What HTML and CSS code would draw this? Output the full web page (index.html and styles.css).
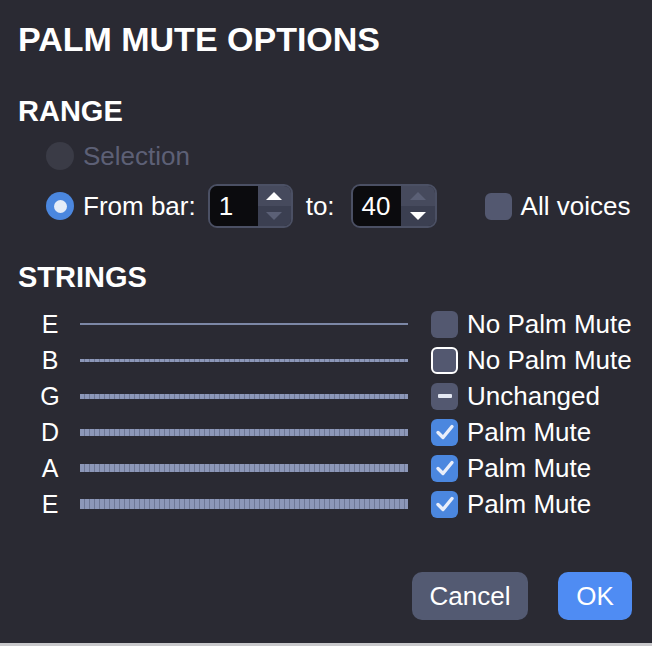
FILE: index.html
```html
<!DOCTYPE html>
<html>
<head>
<meta charset="utf-8">
<link rel="stylesheet" href="styles.css">
</head>
<body>
<div class="dialog">
  <h1 class="title">PALM MUTE OPTIONS</h1>
  <h2 class="heading range-h">RANGE</h2>
  <div class="row sel-row">
    <span class="radio disabled"></span>
    <span class="label dim">Selection</span>
  </div>
  <div class="row from-row">
    <span class="radio on"><span class="dot"></span></span>
    <span class="label">From bar:</span>
    <div class="spinner sp1">
      <div class="field">1</div>
      <div class="stepper">
        <div class="half top"><span class="tri up bright"></span></div>
        <div class="half bottom"><span class="tri down"></span></div>
      </div>
    </div>
    <span class="label to">to:</span>
    <div class="spinner sp2">
      <div class="field">40</div>
      <div class="stepper">
        <div class="half top"><span class="tri up"></span></div>
        <div class="half bottom"><span class="tri down bright"></span></div>
      </div>
    </div>
    <span class="box plain voices-box"></span>
    <span class="label">All voices</span>
  </div>
  <h2 class="heading strings-h">STRINGS</h2>
  <div class="strings">
    <div class="srow"><span class="sname">E</span><span class="wire w1"></span><span class="box plain"></span><span class="label">No Palm Mute</span></div>
    <div class="srow"><span class="sname">B</span><span class="wire w2"></span><span class="box plain focus"></span><span class="label">No Palm Mute</span></div>
    <div class="srow"><span class="sname">G</span><span class="wire w3"></span><span class="box plain"><span class="dash"></span></span><span class="label">Unchanged</span></div>
    <div class="srow"><span class="sname">D</span><span class="wire w4"></span><span class="box checked"><svg viewBox="0 0 26 26" width="26" height="26"><path d="M6 13.5 L11 18.5 L20 7.5" fill="none" stroke="#e9eefa" stroke-width="3.4" stroke-linecap="round" stroke-linejoin="round"/></svg></span><span class="label">Palm Mute</span></div>
    <div class="srow"><span class="sname">A</span><span class="wire w5"></span><span class="box checked"><svg viewBox="0 0 26 26" width="26" height="26"><path d="M6 13.5 L11 18.5 L20 7.5" fill="none" stroke="#e9eefa" stroke-width="3.4" stroke-linecap="round" stroke-linejoin="round"/></svg></span><span class="label">Palm Mute</span></div>
    <div class="srow"><span class="sname">E</span><span class="wire w6"></span><span class="box checked"><svg viewBox="0 0 26 26" width="26" height="26"><path d="M6 13.5 L11 18.5 L20 7.5" fill="none" stroke="#e9eefa" stroke-width="3.4" stroke-linecap="round" stroke-linejoin="round"/></svg></span><span class="label">Palm Mute</span></div>
  </div>
  <div class="buttons">
    <button class="btn cancel">Cancel</button>
    <button class="btn ok">OK</button>
  </div>
</div>
</body>
</html>
```

FILE: styles.css
```css
html, body {
  margin: 0;
  padding: 0;
  background: #c9c9cc;
}
body {
  width: 652px;
  height: 646px;
  overflow: hidden;
  font-family: "Liberation Sans", Arial, sans-serif;
  color: #ffffff;
}
.dialog {
  box-sizing: border-box;
  height: 643px;
  background: #2a2a33;
  padding: 19px 20px 0 18px;
  display: flex;
  flex-direction: column;
}
.title {
  margin: 0;
  font-size: 34px;
  line-height: 40px;
  font-weight: bold;
}
.heading {
  margin: 0;
  font-size: 29px;
  line-height: 34px;
  font-weight: bold;
}
.range-h { margin-top: 35px; }
.row {
  display: flex;
  align-items: center;
}
.sel-row {
  height: 36px;
  margin-top: 10px;
  padding-left: 28px;
}
.from-row {
  height: 44px;
  margin-top: 10px;
  padding-left: 28px;
}
.label {
  font-size: 26px;
  line-height: 30px;
  color: #ffffff;
  white-space: nowrap;
}
.label.dim { color: #5d6076; }
.radio {
  width: 28px;
  height: 28px;
  border-radius: 50%;
  margin-right: 9px;
  display: flex;
  align-items: center;
  justify-content: center;
  flex: none;
}
.radio.disabled { background: #3a3b46; }
.radio.on { background: #4b87df; }
.radio .dot {
  width: 13px;
  height: 13px;
  border-radius: 50%;
  background: #e4ecf8;
}
.spinner {
  box-sizing: border-box;
  width: 85px;
  height: 44px;
  border: 2px solid #4b5064;
  border-radius: 9px;
  display: flex;
  overflow: hidden;
  flex: none;
}
.sp1 { margin-left: 12px; }
.sp2 { width: 86px; }
.to { margin-left: 13px; margin-right: 16px; }
.field {
  width: 48px;
  background: #0b0b0e;
  font-size: 26px;
  line-height: 40px;
  padding-left: 9px;
  box-sizing: border-box;
}
.stepper {
  flex: 1;
  display: flex;
  flex-direction: column;
}
.half {
  flex: 1;
  display: flex;
  align-items: center;
  justify-content: center;
}
.half.top { background: #464a5d; }
.half.bottom { background: #3b3f51; }
.tri {
  width: 0;
  height: 0;
  border-left: 8px solid transparent;
  border-right: 8px solid transparent;
}
.tri.up { border-bottom: 8px solid #5b6076; }
.tri.down { border-top: 8px solid #5b6076; }
.tri.up.bright { border-bottom-color: #ffffff; }
.tri.down.bright { border-top-color: #ffffff; }
.box {
  box-sizing: border-box;
  width: 27px;
  height: 27px;
  border-radius: 6px;
  margin-right: 9px;
  display: flex;
  align-items: center;
  justify-content: center;
  flex: none;
}
.box.plain { background: #535870; }
.box.focus { border: 2px solid #ffffff; }
.box.checked { background: #4b87df; }
.box .dash {
  width: 14px;
  height: 4px;
  border-radius: 1px;
  background: #e4e8f2;
}
.voices-box { margin-left: 48px; }
.strings-h { margin-top: 32px; }
.strings {
  margin-top: 12px;
  display: flex;
  flex-direction: column;
}
.srow {
  height: 36px;
  display: flex;
  align-items: center;
}
.sname {
  width: 62px;
  padding-left: 18px;
  padding-right: 16px;
  box-sizing: border-box;
  text-align: center;
  font-size: 25px;
  flex: none;
}
.wire {
  width: 328px;
  margin-right: 23px;
  flex: none;
  background: repeating-linear-gradient(90deg, #8c97b8 0 4px, #6d7795 4px 5px);
}
.w1 { height: 2px; background: #7c87a6; }
.w2 { height: 3px; }
.w3 { height: 5px; }
.w4 { height: 7px; }
.w5 { height: 8px; }
.w6 { height: 10px; }
.buttons {
  margin-top: 50px;
  display: flex;
  justify-content: flex-end;
  gap: 30px;
}
.btn {
  height: 48px;
  border: none;
  border-radius: 10px;
  font-family: "Liberation Sans", Arial, sans-serif;
  font-size: 26px;
  color: #ffffff;
  padding: 0;
}
.cancel { width: 116px; background: #535a72; }
.ok { width: 74px; background: #4f8cf3; }
```
